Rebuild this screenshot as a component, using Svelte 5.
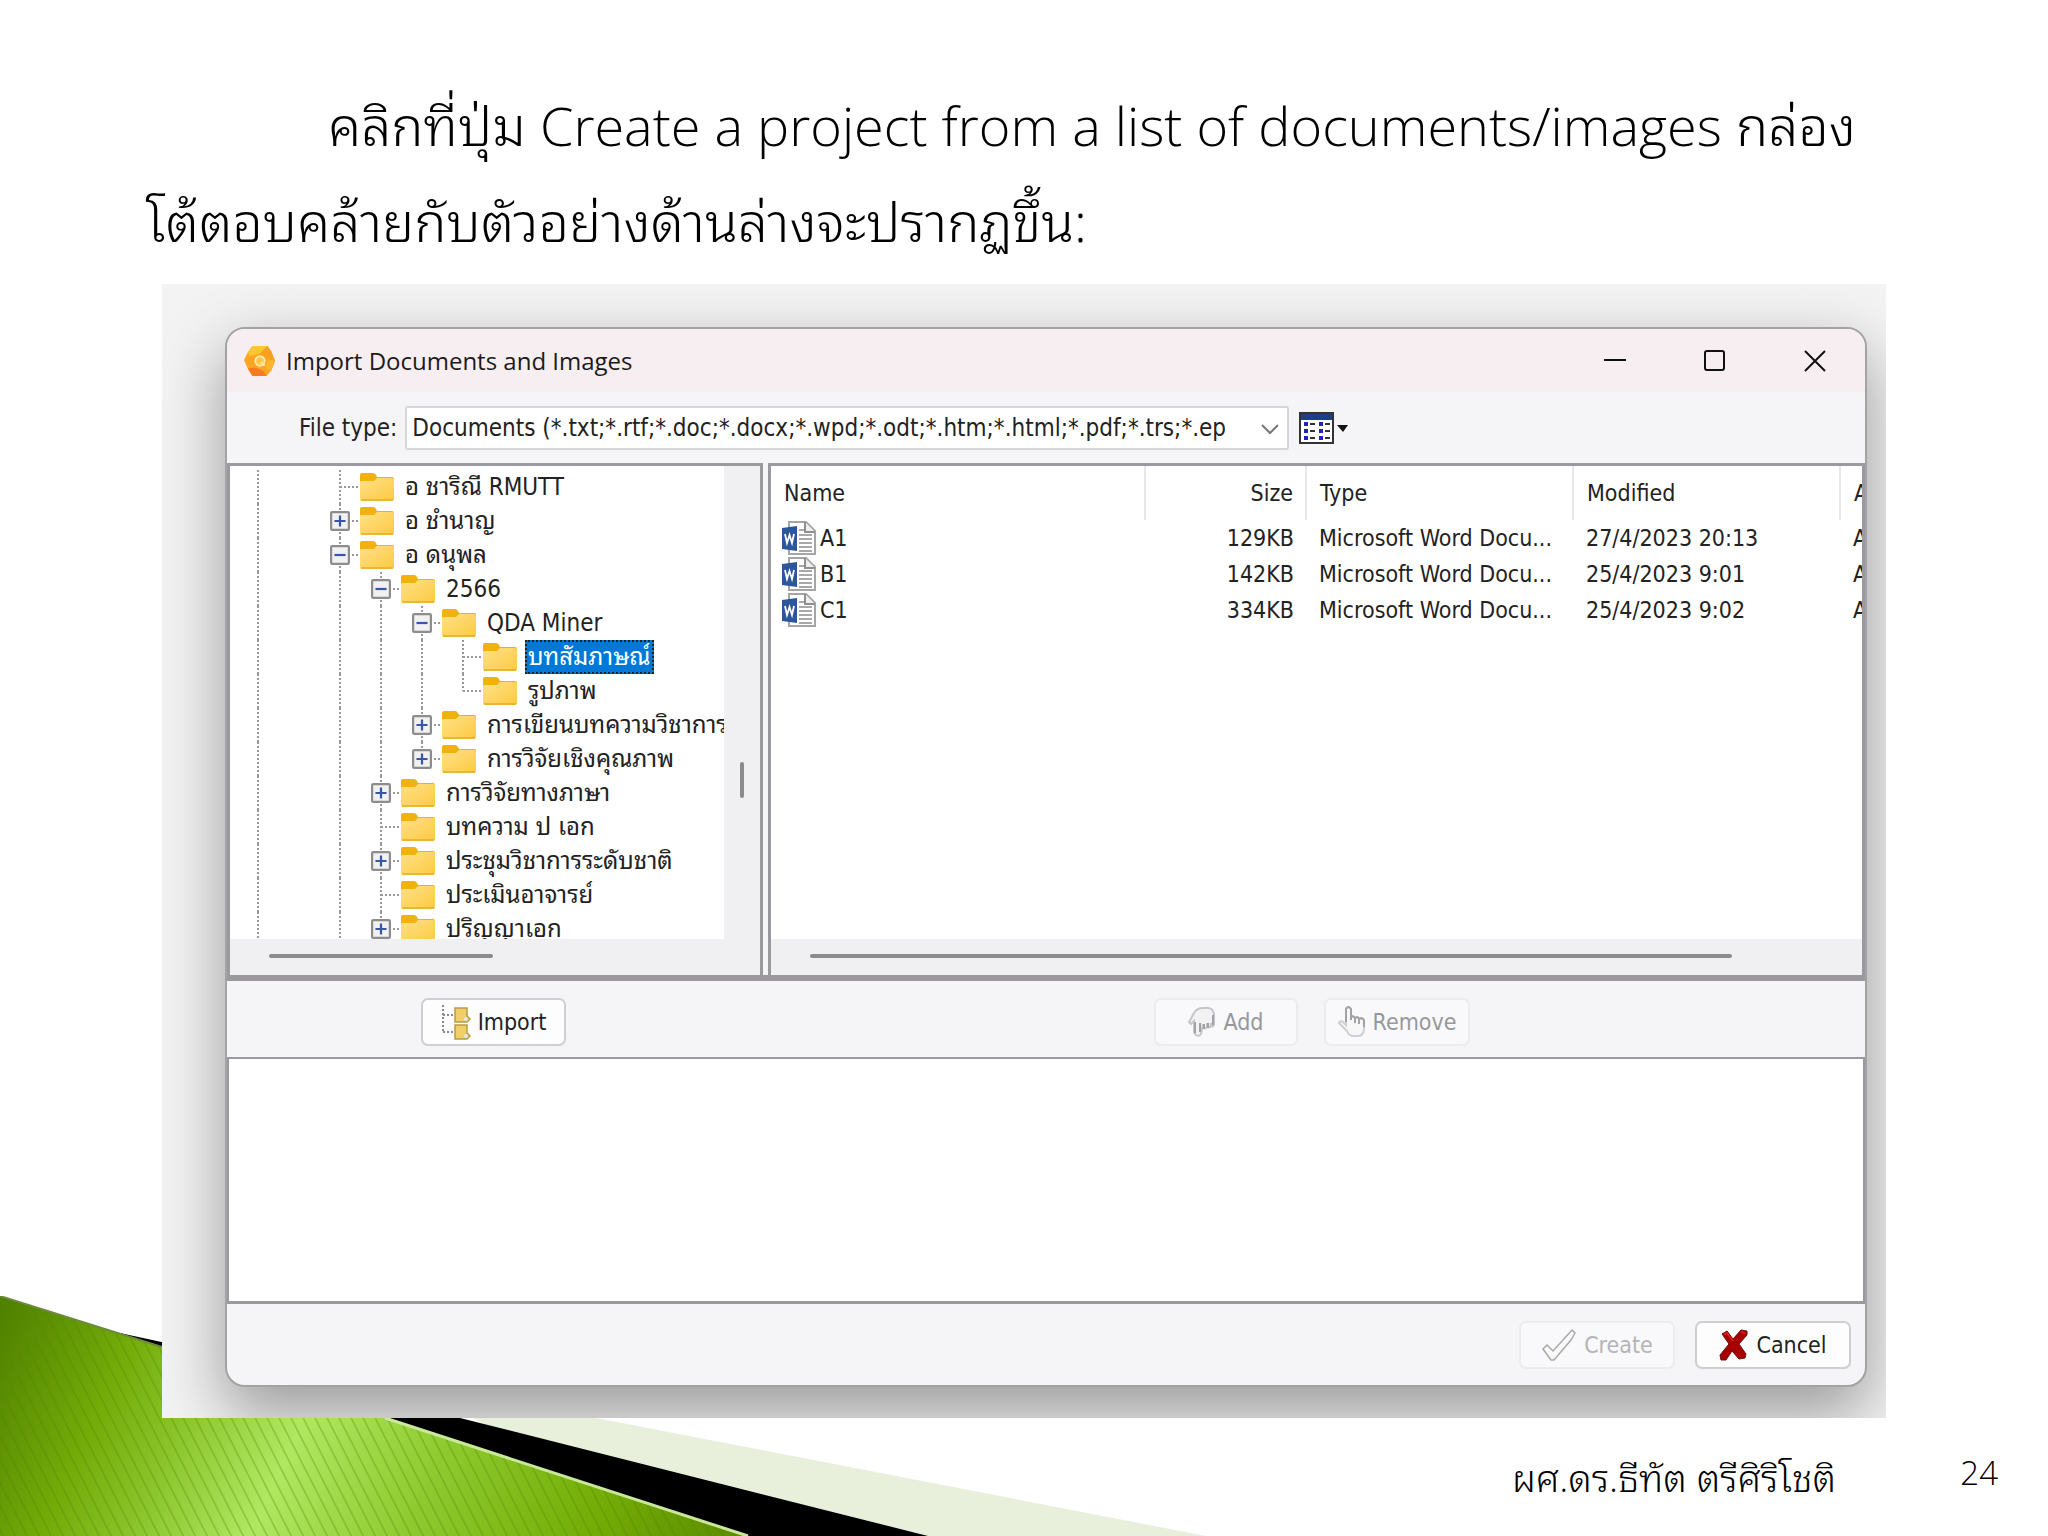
<script>
  // guides: one character per column left of the node. '|' draws a line, ' ' leaves a gap.
  // box: '+' or '-' for nodes with children. last: the line stops at this node.
  const tree = [
    { guides: '| ', label: 'อ ชาริณี RMUTT' },
    { guides: '| ', box: '+', label: 'อ ชำนาญ' },
    { guides: '| ', box: '-', label: 'อ ดนุพล' },
    { guides: '| |', box: '-', label: '2566' },
    { guides: '| ||', box: '-', label: 'QDA Miner' },
    { guides: '| |||', label: 'บทสัมภาษณ์', selected: true },
    { guides: '| |||', last: true, label: 'รูปภาพ' },
    { guides: '| ||', box: '+', label: 'การเขียนบทความวิชาการ' },
    { guides: '| ||', box: '+', last: true, label: 'การวิจัยเชิงคุณภาพ' },
    { guides: '| |', box: '+', label: 'การวิจัยทางภาษา' },
    { guides: '| |', label: 'บทความ ป เอก' },
    { guides: '| |', box: '+', label: 'ประชุมวิชาการระดับชาติ' },
    { guides: '| |', label: 'ประเมินอาจารย์' },
    { guides: '| |', box: '+', label: 'ปริญญาเอก' },
  ]

  const files = [
    { name: 'A1', size: '129KB', type: 'Microsoft Word Docu...', modified: '27/4/2023 20:13' },
    { name: 'B1', size: '142KB', type: 'Microsoft Word Docu...', modified: '25/4/2023 9:01' },
    { name: 'C1', size: '334KB', type: 'Microsoft Word Docu...', modified: '25/4/2023 9:02' },
  ]
</script>

{#snippet folder()}
  <svg class="folder" viewBox="0 0 34 28" aria-hidden="true">
    <path d="M0 2q0-2 2-2h11q2 0 3 2l1 2h15q2 0 2 2v10H0z" fill="#f2b10f" />
    <path d="M0 9q0-1 2-1h12l3-3h15q2 0 2 2v19q0 2-2 2H2q-2 0-2-2z" fill="url(#folder-fill)" />
    <path d="M1 27h32" stroke="#e6ac2c" stroke-width="1.5" />
  </svg>
{/snippet}

{#snippet wordFile()}
  <svg class="word" viewBox="0 0 34 36" aria-hidden="true">
    <path d="M7 2h17l9 9v23H7z" fill="#fff" stroke="#a5a5a5" stroke-width="2" />
    <path d="M23 2v10h10" fill="#eee" stroke="#8f8f8f" stroke-width="2" />
    <path d="M17 10h5M17 15h13M17 19h13M17 23h13M17 27h13M17 31h13" stroke="#8c8c8c" stroke-width="1.5" />
    <path d="M0 8l15-2v25L0 29z" fill="#2b579a" />
    <path d="M3 14l2 9 2.5-8 2.5 8 2-9" fill="none" stroke="#fff" stroke-width="1.8" />
  </svg>
{/snippet}

<main class="slide">
  <svg class="ribbon" viewBox="0 0 1210 240" aria-hidden="true">
    <defs>
      <linearGradient id="ribbon-fill" gradientUnits="userSpaceOnUse" x1="0" y1="10" x2="700" y2="325">
        <stop offset="0" stop-color="#4f8000" />
        <stop offset="0.17" stop-color="#73ab08" />
        <stop offset="0.26" stop-color="#86c024" />
        <stop offset="0.42" stop-color="#b0e862" />
        <stop offset="0.6" stop-color="#8fcb30" />
        <stop offset="0.82" stop-color="#74ad06" />
        <stop offset="1" stop-color="#5c8d00" />
      </linearGradient>
      <pattern id="ribbon-lines" width="12" height="40" patternUnits="userSpaceOnUse" patternTransform="skewX(27)">
        <path d="M1 0v40" stroke="#4f8600" stroke-opacity="0.4" stroke-width="1.5" />
      </pattern>
      <linearGradient id="folder-fill" x1="0" y1="0" x2="1" y2="1">
        <stop offset="0" stop-color="#ffe08a" />
        <stop offset="1" stop-color="#fdca40" />
      </linearGradient>
    </defs>
    <path d="M400 84L1206 240H700z" fill="#e8f0dc" />
    <path d="M106 34L180 50 460 122 928 240H720z" fill="#000" />
    <path d="M0 0L162 51 385 122 746 240H0z" fill="url(#ribbon-fill)" />
    <path d="M0 0L162 51 385 122 746 240H0z" fill="url(#ribbon-lines)" />
    <path d="M385 122L748 240" stroke="#c9e89a" stroke-width="3" />
    <path d="M0 0L162 51" stroke="#6d8a3c" stroke-width="2" />
  </svg>

  <h1 class="lead">
    คลิกที่ปุ่ม Create a project from a list of documents/images กล่อง<br />โต้ตอบคล้ายกับตัวอย่างด้านล่างจะปรากฏขึ้น:
  </h1>

  <div class="shot">
    <section class="window" aria-label="Import Documents and Images">
      <header class="titlebar">
        <svg class="logo" viewBox="0 0 34 34" aria-hidden="true">
          <path d="M9 1h16l4 6 4 10-4 10-5 6H9L4 25 0 16 4 8z" fill="#fba524" />
          <path d="M9 1h16l-8 8-11 3-2-4z" fill="#ffc62e" />
          <path d="M25 1l4 6 4 10-8-2-8-6z" fill="#f9a01f" />
          <path d="M33 17l-4 10-6-2 2-10z" fill="#ffb52e" />
          <path d="M9 33L4 25l8-1 8 3 4 6z" fill="#f67a20" />
          <circle cx="17" cy="17" r="5" fill="#ffc445" stroke="#ffe9a6" stroke-width="2" />
          <path d="M18 18l4 4" stroke="#ffe9a6" stroke-width="2" />
        </svg>
        <h2>Import Documents and Images</h2>
        <button class="caption" aria-label="Minimize">
          <svg viewBox="0 0 22 22"><path d="M0 10h22" /></svg>
        </button>
        <button class="caption" aria-label="Maximize">
          <svg viewBox="0 0 22 22"><rect x="1" y="1" width="19" height="19" rx="2" /></svg>
        </button>
        <button class="caption" aria-label="Close">
          <svg viewBox="0 0 22 22"><path d="M1 1l20 20M21 1L1 21" /></svg>
        </button>
      </header>

      <div class="filter">
        <label for="file-type">File type:</label>
        <div class="combo">
          <select id="file-type">
            <option>Documents (*.txt;*.rtf;*.doc;*.docx;*.wpd;*.odt;*.htm;*.html;*.pdf;*.trs;*.ep</option>
          </select>
          <svg viewBox="0 0 18 12" aria-hidden="true"><path d="M1 2l8 8 8-8" /></svg>
        </div>
        <button class="view" aria-label="View">
          <svg viewBox="0 0 50 32" aria-hidden="true">
            <rect x="1" y="1" width="33" height="30" fill="#fff" stroke="#333" stroke-width="2" />
            <path d="M2 5h31" stroke="#1d3f86" stroke-width="6" />
            <path d="M5 12h4M5 19h4M5 26h4M20 12h4M20 19h4M20 26h4" stroke="#2323b5" stroke-width="4" />
            <path d="M11 12h5M11 19h5M11 26h5M26 12h5M26 19h5M26 26h5" stroke="#333" stroke-width="2" />
            <path d="M38 13h11l-5 7z" fill="#111" />
          </svg>
        </button>
      </div>

      <div class="panes">
        <div class="pane pane--tree">
          <div class="tree-row">
            <ul class="tree">
              {#each tree as node}
                <li>
                  {#each node.guides as guide}
                    <span class="guide" class:guide--line={guide === '|'}></span>
                  {/each}
                  <span class="guide guide--branch" class:guide--last={node.last}>
                    {#if node.box}
                      <svg class="box" viewBox="0 0 18 18" aria-hidden="true">
                        <rect x="1" y="1" width="16" height="16" rx="1" fill="#f1f1f1" stroke="#8d8d8d" stroke-width="2" />
                        <path d={node.box === '+' ? 'M4 9h10M9 4v10' : 'M4 9h10'} stroke="#3a56a8" stroke-width="2" />
                      </svg>
                    {/if}
                  </span>
                  {@render folder()}
                  <span class="node" class:node--selected={node.selected}>{node.label}</span>
                </li>
              {/each}
            </ul>
            <div class="vscroll"><span></span></div>
          </div>
          <div class="hscroll"><span></span></div>
        </div>

        <div class="pane pane--files">
          <table>
            <thead>
              <tr>
                <th>Name</th>
                <th class="size">Size</th>
                <th class="type">Type</th>
                <th class="modified">Modified</th>
                <th class="attr">A</th>
              </tr>
            </thead>
            <tbody>
              {#each files as file}
                <tr>
                  <td><div class="file">{@render wordFile()}{file.name}</div></td>
                  <td class="size">{file.size}</td>
                  <td class="type">{file.type}</td>
                  <td class="modified">{file.modified}</td>
                  <td class="attr">A</td>
                </tr>
              {/each}
            </tbody>
          </table>
          <div class="hscroll hscroll--files"><span></span></div>
        </div>
      </div>

      <div class="actions">
        <button class="btn btn--import">
          <svg width="30" height="36" viewBox="0 0 30 36" aria-hidden="true">
            <path d="M2 1v27M2 11h12M2 28h12" fill="none" stroke="#888" stroke-width="2" stroke-dasharray="2 2" />
            <path d="M14 4h12v8l3 3-3 3H14zM14 21h12v8l3 3-3 3H14z" fill="#f0cf68" stroke="#b99b45" stroke-width="1.5" />
            <circle cx="25" cy="15" r="2" fill="#d8e8e0" />
            <circle cx="25" cy="32" r="2" fill="#d8e8e0" />
          </svg>
          Import
        </button>
        <button class="btn btn--add" disabled>
          <svg width="28" height="34" viewBox="0 0 28 34" aria-hidden="true">
            <path
              d="M8 30q-2-1-2-4V16l-3 3-2-2 5-9q3-5 9-5h5q5 0 6 6v11q-2 3-3 0v-2 3q-2 3-4 0v-3 4q-2 3-4 0v-3l-2 10q-2 3-5 1z"
              fill="#f2f2f3" stroke="#c6c6c9" stroke-width="2" />
            <path d="M7 17v11M12 27V18M16 19v5M20 18v5M25 10v10" stroke="#a2a2a5" stroke-width="2" />
          </svg>
          Add
        </button>
        <button class="btn btn--remove" disabled>
          <svg width="28" height="34" viewBox="0 0 28 34" aria-hidden="true">
            <path
              d="M8 17V4q2-4 5 0v8q2-2 4 1 3-2 4 1 3-2 5 1v8q0 8-6 8h-5q-4 0-6-5L1 18q1-3 4-1l3 3z"
              fill="#f7f7f8" stroke="#cfcfd2" stroke-width="2" />
            <path d="M8 17V4q2-4 5 0v11M17 13v5M21 14v5M26 15v7M13 12q2-2 4 1 3-2 4 1 3-2 5 1" fill="none" stroke="#a2a2a5" stroke-width="2" />
          </svg>
          Remove
        </button>
      </div>

      <div class="list"></div>

      <footer class="buttons">
        <button class="btn btn--create" disabled>
          <svg width="36" height="34" viewBox="0 0 36 34" aria-hidden="true">
            <path d="M2 21l4-4 6 6L31 2l3 3-4 7-17 20h-3z" fill="#fafafa" stroke="#a9a9a9" stroke-width="1.5" />
          </svg>
          Create
        </button>
        <button class="btn btn--cancel">
          <svg width="30" height="34" viewBox="0 0 30 34" aria-hidden="true">
            <path d="M3 6l5-3 6 8 8-9 6 1v4l-8 9 7 10-1 4-6 1-7-8-6 9-5 0-1-5 9-11z" fill="#a80000" stroke="#6d1010" stroke-width="1" />
            <path d="M5 6l3-1 6 8M22 4l4 1" fill="none" stroke="#d81a1a" stroke-width="2" />
          </svg>
          Cancel
        </button>
      </footer>
    </section>
  </div>

  <footer class="credit">
    <span class="author">ผศ.ดร.ธีทัต ตรีศิริโชติ</span>
    <span class="page">24</span>
  </footer>
</main>

<style>
  :global(body) {
    margin: 0;
    background: #fff;
  }

  .slide {
    position: relative;
    display: flex;
    flex-direction: column;
    box-sizing: border-box;
    min-height: 100vh;
    overflow: hidden;
    padding: 77px 162px 0;
    font-family: 'Open Sans', 'TH Sarabun New', 'Noto Sans Thai Looped', 'Noto Sans Thai', sans-serif;
    color: #000;
  }

  .ribbon {
    position: absolute;
    left: 0;
    bottom: 0;
    width: 1210px;
    height: 240px;
  }

  .lead {
    position: relative;
    margin: 0 -20px 15px -16px;
    font-size: 54px;
    font-weight: 300;
    line-height: 96px;
    text-indent: 182px;
    white-space: nowrap;
  }

  .shot {
    position: relative;
    overflow: hidden;
    padding: 43px 19px 31px 63px;
    background: #f3f3f3;
  }

  .window {
    overflow: hidden;
    border: 2px solid #a3a3a5;
    border-radius: 20px;
    background: #f5f5f8;
    box-shadow: 0 26px 64px 2px rgba(0, 0, 0, 0.36);
    font-family: 'DejaVu Sans Condensed', 'Noto Sans Thai Looped', 'Noto Sans Thai', sans-serif;
    font-size: 23px;
    color: #222;
  }

  .window button,
  .window select {
    font: inherit;
    color: inherit;
  }

  .titlebar {
    display: flex;
    align-items: center;
    height: 63px;
    padding-left: 17px;
    background: #f7eef1;
  }

  .logo {
    width: 32px;
    height: 32px;
    margin-right: 10px;
  }

  .titlebar h2 {
    flex: 1;
    margin: 0;
    font-family: 'Open Sans', sans-serif;
    font-size: 24px;
    font-weight: 400;
    color: #1b1b1b;
  }

  .caption {
    display: grid;
    place-items: center;
    width: 100px;
    height: 63px;
    padding: 0;
    border: 0;
    background: none;
  }

  .caption svg {
    width: 22px;
    height: 22px;
    fill: none;
    stroke: #111;
    stroke-width: 2;
  }

  .filter {
    display: flex;
    align-items: center;
    height: 71px;
    padding-left: 72px;
    font-size: 24px;
  }

  .combo {
    position: relative;
    width: 884px;
    margin: 0 10px 0 8px;
  }

  .combo select {
    width: 100%;
    height: 44px;
    padding: 0 40px 0 5px;
    border: 2px solid #d6d6d8;
    border-radius: 3px;
    background: #fff;
    appearance: none;
  }

  .combo svg {
    position: absolute;
    top: 17px;
    right: 10px;
    width: 18px;
    height: 12px;
    fill: none;
    stroke: #777;
    stroke-width: 2;
  }

  .view {
    padding: 0;
    border: 0;
    background: none;
  }

  .view svg {
    display: block;
    width: 50px;
    height: 32px;
  }

  .panes {
    display: flex;
    gap: 5px;
    height: 512px;
    border-bottom: 6px solid #9b999e;
  }

  .pane {
    display: flex;
    flex-direction: column;
    box-sizing: border-box;
    border: 3px solid #9b999e;
    border-bottom: 0;
    background: #fff;
  }

  .pane--tree {
    width: 536px;
  }

  .pane--files {
    flex: 1;
    min-width: 0;
  }

  .tree-row {
    display: flex;
    flex: 1;
    min-height: 0;
    overflow: hidden;
  }

  .tree {
    flex: 1;
    min-width: 0;
    margin: 0;
    padding: 4px 0 0 7px;
    overflow: hidden;
    list-style: none;
    font-size: 24px;
  }

  .tree li {
    display: flex;
    align-items: center;
    height: 34px;
    white-space: nowrap;
  }

  .guide {
    flex: none;
    display: grid;
    place-items: center;
    width: 41px;
    height: 34px;
  }

  .guide--line {
    background: repeating-linear-gradient(#999 0 2px, transparent 2px 4px) center / 2px 100% no-repeat;
  }

  .guide--branch {
    background:
      repeating-linear-gradient(#999 0 2px, transparent 2px 4px) center / 2px 100% no-repeat,
      repeating-linear-gradient(90deg, #999 0 2px, transparent 2px 4px) right center / 20px 2px no-repeat;
  }

  .guide--last {
    background:
      repeating-linear-gradient(#999 0 2px, transparent 2px 4px) center top / 2px 50% no-repeat,
      repeating-linear-gradient(90deg, #999 0 2px, transparent 2px 4px) right center / 20px 2px no-repeat;
  }

  .box {
    width: 20px;
    height: 20px;
  }

  .folder {
    flex: none;
    width: 34px;
    height: 28px;
    margin-right: 8px;
  }

  .node {
    padding: 0 3px;
    line-height: 34px;
  }

  .node--selected {
    outline: 2px dotted #222;
    outline-offset: -2px;
    background: #0078d7;
    color: #fff;
  }

  .vscroll {
    width: 36px;
    background: #f0eff1;
  }

  .vscroll span {
    display: block;
    width: 4px;
    height: 36px;
    margin: 296px auto 0;
    border-radius: 2px;
    background: #8b8b8d;
  }

  .hscroll {
    height: 36px;
    padding: 15px 0 0 39px;
    box-sizing: border-box;
    background: #f0eff1;
  }

  .hscroll span {
    display: block;
    width: 224px;
    height: 4px;
    border-radius: 2px;
    background: #8b8b8d;
  }

  .hscroll--files {
    margin-top: auto;
  }

  .hscroll--files span {
    width: 922px;
  }

  table {
    width: 100%;
    border-collapse: collapse;
    table-layout: fixed;
  }

  th,
  td {
    height: 36px;
    padding: 0 0 0 13px;
    overflow: hidden;
    font-weight: 400;
    line-height: 36px;
    text-align: left;
    white-space: nowrap;
  }

  th {
    height: 54px;
    border-right: 2px solid #e8e8ea;
  }

  th:last-child {
    border-right: 0;
  }

  .size {
    width: 147px;
    padding-right: 12px;
    padding-left: 0;
    text-align: right;
  }

  .type,
  .modified {
    width: 252px;
  }

  .attr {
    width: 8px;
  }

  .file {
    display: flex;
    align-items: center;
    gap: 4px;
    height: 36px;
    margin-left: -2px;
  }

  .word {
    width: 34px;
    height: 36px;
  }

  .actions,
  .buttons {
    display: flex;
    align-items: center;
  }

  .actions {
    box-sizing: border-box;
    height: 76px;
    padding: 6px 0 0 194px;
  }

  .btn {
    display: flex;
    align-items: center;
    justify-content: center;
    gap: 7px;
    box-sizing: border-box;
    height: 48px;
    padding: 0;
    border: 2px solid #cfcfd2;
    border-radius: 7px;
    background: #fdfdfd;
  }

  .window .btn:disabled {
    border-color: #ececef;
    background: #f9f9fb;
    color: #98989b;
  }

  .btn--import {
    width: 145px;
  }

  .btn--add {
    width: 144px;
    margin-left: 588px;
  }

  .btn--remove {
    width: 146px;
    margin-left: 26px;
  }

  .list {
    height: 242px;
    border: solid #9b999e;
    border-width: 2px 2px 3px;
    background: #fff;
  }

  .buttons {
    justify-content: flex-end;
    gap: 20px;
    height: 81px;
    padding-right: 14px;
  }

  .btn--create,
  .btn--cancel {
    width: 156px;
  }

  .window .btn--create:disabled {
    color: #b5b5b8;
  }

  .credit {
    position: relative;
    display: flex;
    justify-content: flex-end;
    align-items: center;
    height: 108px;
    margin-right: -112px;
    font-weight: 300;
  }

  .author {
    padding-top: 4px;
    font-size: 38px;
  }

  .page {
    width: 162px;
    font-size: 33px;
    text-align: right;
  }
</style>
